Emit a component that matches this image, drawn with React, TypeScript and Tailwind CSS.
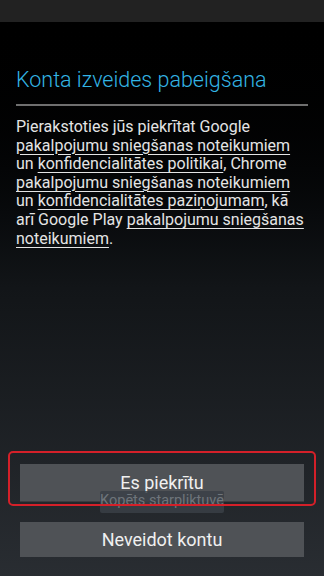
export default function App() {
  const link = 'underline decoration-1 underline-offset-[3px]';
  return (
    <div className="flex h-[576px] w-[324px] flex-col overflow-hidden bg-gradient-to-b from-[#000000] via-[#121518] to-[#292d32] font-['Roboto',sans-serif]">
      <div className="h-[22px] shrink-0 bg-[#222222]" />
      <div className="px-4 pt-[44px]">
        <h1 className="text-[21.5px] font-light leading-[28px] text-[#33b5e5]">Konta izveides pabeigšana</h1>
        <div className="mt-[10px] h-[2px] bg-[#6f6f6f]" />
        <p className="mt-[12px] text-[16px] leading-[18.6px] text-[#e4e4e4]">
          Pierakstoties jūs piekrītat Google
          <br />
          <span className={link}>pakalpojumu sniegšanas noteikumiem</span>
          <br />
          un <span className={link}>konfidencialitātes politikai</span>, Chrome
          <br />
          <span className={link}>pakalpojumu sniegšanas noteikumiem</span>
          <br />
          un <span className={link}>konfidencialitātes paziņojumam</span>, kā
          <br />
          arī Google Play <span className={link}>pakalpojumu sniegšanas</span>
          <br />
          <span className={link}>noteikumiem</span>.
        </p>
      </div>
      <div className="mt-auto px-5 pb-[19px]">
        <div className="relative">
          <button className="h-[37px] w-full bg-[#4f5256] text-[18px] text-[#f0f0f0] shadow-[0_1px_0_#3a3d40]">Es piekrītu</button>
          <div className="absolute left-[80px] top-[27px] h-[22px] w-[124px] rounded-[2px] bg-[#3a4047]/85 text-center text-[14.5px] leading-[20px] text-[#6f757b]">
            Kopēts starpliktuvē
          </div>
          <div className="pointer-events-none absolute -left-3 -right-3 -top-[13px] h-[55px] rounded-[5px] border-2 border-[#d42029]" />
        </div>
        <button className="mt-[21px] h-[35px] w-full bg-[#4f5256] text-[18px] text-[#f0f0f0]">Neveidot kontu</button>
      </div>
    </div>
  );
}
